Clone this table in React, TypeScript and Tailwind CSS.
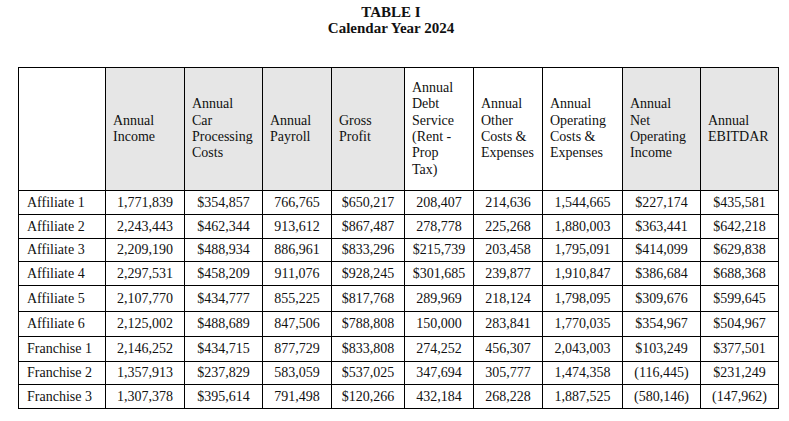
import React from "react";

const headers: { lines: string[]; gray: boolean }[] = [
  { lines: [], gray: false },
  { lines: ["Annual", "Income"], gray: true },
  { lines: ["Annual", "Car", "Processing", "Costs"], gray: true },
  { lines: ["Annual", "Payroll"], gray: true },
  { lines: ["Gross", "Profit"], gray: true },
  { lines: ["Annual", "Debt", "Service", "(Rent -", "Prop", "Tax)"], gray: false },
  { lines: ["Annual", "Other", "Costs &", "Expenses"], gray: false },
  { lines: ["Annual", "Operating", "Costs &", "Expenses"], gray: false },
  { lines: ["Annual", "Net", "Operating", "Income"], gray: true },
  { lines: ["Annual", "EBITDAR"], gray: true },
];

const widths = [
  "w-[87px]",
  "w-[79px]",
  "w-[78px]",
  "w-[69px]",
  "w-[73px]",
  "w-[69px]",
  "w-[69px]",
  "w-[80px]",
  "w-[78px]",
  "w-[78px]",
];

const rows: { h: string; cells: string[] }[] = [
  { h: "h-[24px]", cells: ["Affiliate 1", "1,771,839", "$354,857", "766,765", "$650,217", "208,407", "214,636", "1,544,665", "$227,174", "$435,581"] },
  { h: "h-[24px]", cells: ["Affiliate 2", "2,243,443", "$462,344", "913,612", "$867,487", "278,778", "225,268", "1,880,003", "$363,441", "$642,218"] },
  { h: "h-[23px]", cells: ["Affiliate 3", "2,209,190", "$488,934", "886,961", "$833,296", "$215,739", "203,458", "1,795,091", "$414,099", "$629,838"] },
  { h: "h-[24px]", cells: ["Affiliate 4", "2,297,531", "$458,209", "911,076", "$928,245", "$301,685", "239,877", "1,910,847", "$386,684", "$688,368"] },
  { h: "h-[26px]", cells: ["Affiliate 5", "2,107,770", "$434,777", "855,225", "$817,768", "289,969", "218,124", "1,798,095", "$309,676", "$599,645"] },
  { h: "h-[25px]", cells: ["Affiliate 6", "2,125,002", "$488,689", "847,506", "$788,808", "150,000", "283,841", "1,770,035", "$354,967", "$504,967"] },
  { h: "h-[25px]", cells: ["Franchise 1", "2,146,252", "$434,715", "877,729", "$833,808", "274,252", "456,307", "2,043,003", "$103,249", "$377,501"] },
  { h: "h-[23px]", cells: ["Franchise 2", "1,357,913", "$237,829", "583,059", "$537,025", "347,694", "305,777", "1,474,358", "(116,445)", "$231,249"] },
  { h: "h-[24px]", cells: ["Franchise 3", "1,307,378", "$395,614", "791,498", "$120,266", "432,184", "268,228", "1,887,525", "(580,146)", "(147,962)"] },
];

export default function App() {
  return (
    <div
      className="w-[789px] h-[421px] bg-white text-[#111] overflow-hidden"
      style={{ fontFamily: '"Liberation Serif", "Times New Roman", serif' }}
    >
      <div className="pt-[4px] text-center font-bold text-[15px] leading-[16px] pr-[7px]">
        <div>TABLE I</div>
        <div>Calendar Year 2024</div>
      </div>
      <div className="pl-[18px] pt-[31px]">
        <table className="table-fixed border-collapse w-[760px] text-[14px]">
          <colgroup>
            {widths.map((w, i) => (
              <col key={i} className={w} />
            ))}
          </colgroup>
          <thead>
            <tr className="h-[123px]">
              {headers.map((h, i) => (
                <th
                  key={i}
                  className={`border border-black align-middle text-left font-normal leading-[16.4px] pl-[7px] pr-0 ${
                    h.gray ? "bg-[#e6e6e6]" : "bg-white"
                  }`}
                >
                  {h.lines.map((l, j) => (
                    <div key={j} className="whitespace-nowrap">
                      {l}
                    </div>
                  ))}
                </th>
              ))}
            </tr>
          </thead>
          <tbody>
            {rows.map((r, i) => (
              <tr key={i} className={r.h}>
                {r.cells.map((c, j) => (
                  <td
                    key={j}
                    className={`border border-black align-middle leading-[16px] whitespace-nowrap p-0 ${
                      j === 0 ? "text-left pl-[8px]" : "text-center"
                    }`}
                  >
                    {c}
                  </td>
                ))}
              </tr>
            ))}
          </tbody>
        </table>
      </div>
    </div>
  );
}
